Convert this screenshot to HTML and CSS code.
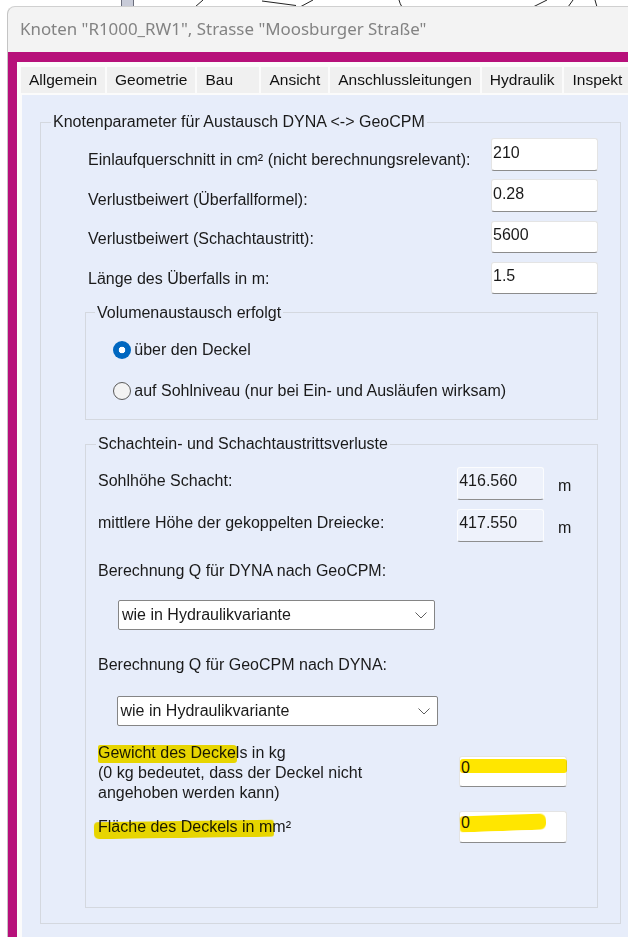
FILE: index.html
```html
<!DOCTYPE html>
<html lang="de">
<head>
<meta charset="utf-8">
<title>Knoten R1000_RW1</title>
<link rel="stylesheet" href="styles.css">
</head>
<body>
<div class="desktop">
  <svg class="sketch" width="628" height="6" viewBox="0 0 628 6">
    <rect x="121.5" y="-2" width="12" height="9" fill="#c8cbd8" stroke="#6b6e7c" stroke-width="1"/>
    <g fill="none" stroke="#222" stroke-width="1">
      <path d="M195 7 L203 0"/>
      <path d="M262 1 L296 5.5"/>
      <path d="M300 7 L313 0"/>
      <path d="M399 0 Q400 4 402 7"/>
      <path d="M533 7 L547 0"/>
      <path d="M568 7 L573 0"/>
      <path d="M595 0 L597 7"/>
    </g>
  </svg>
</div>
<div class="window">
  <div class="titlebar">Knoten "R1000_RW1", Strasse "Moosburger Straße"</div>
  <div class="frame">
    <div class="client">
      <div class="tabs">
        <div class="tab">Allgemein</div>
        <div class="tab">Geometrie</div>
        <div class="tab tab--wide">Bau</div>
        <div class="tab">Ansicht</div>
        <div class="tab">Anschlussleitungen</div>
        <div class="tab">Hydraulik</div>
        <div class="tab">Inspekt</div>
      </div>
      <div class="page">
        <fieldset class="group group--outer">
          <legend>Knotenparameter für Austausch DYNA &lt;-&gt; GeoCPM</legend>
          <div class="params">
            <div class="params__labels">
              <div class="label">Einlaufquerschnitt in cm² (nicht berechnungsrelevant):</div>
              <div class="label">Verlustbeiwert (Überfallformel):</div>
              <div class="label">Verlustbeiwert (Schachtaustritt):</div>
              <div class="label">Länge des Überfalls in m:</div>
            </div>
            <div class="params__fields">
              <div class="field">210</div>
              <div class="field">0.28</div>
              <div class="field">5600</div>
              <div class="field">1.5</div>
            </div>
          </div>

          <fieldset class="group group--inner group--vol">
            <legend>Volumenaustausch erfolgt</legend>
            <div class="radios">
              <div class="radio-row"><span class="radio radio--on"></span>über den Deckel</div>
              <div class="radio-row"><span class="radio"></span>auf Sohlniveau (nur bei Ein- und Ausläufen wirksam)</div>
            </div>
          </fieldset>

          <fieldset class="group group--inner group--schacht">
            <legend>Schachtein- und Schachtaustrittsverluste</legend>
            <div class="schacht">
              <div class="ro-row">
                <div class="label">Sohlhöhe Schacht:</div>
                <div class="field field--ro">416.560</div>
                <div class="unit">m</div>
              </div>
              <div class="ro-row ro-row--second">
                <div class="label">mittlere Höhe der gekoppelten Dreiecke:</div>
                <div class="field field--ro">417.550</div>
                <div class="unit">m</div>
              </div>

              <div class="label label--q1">Berechnung Q für DYNA nach GeoCPM:</div>
              <div class="select select--a">
                <span>wie in Hydraulikvariante</span>
                <svg class="chevron" width="12" height="7" viewBox="0 0 12 7"><polyline points="0.5,0.5 6,6 11.5,0.5" fill="none" stroke="#5f5f5f" stroke-width="1"/></svg>
              </div>

              <div class="label label--q2">Berechnung Q für GeoCPM nach DYNA:</div>
              <div class="select select--b">
                <span>wie in Hydraulikvariante</span>
                <svg class="chevron" width="12" height="7" viewBox="0 0 12 7"><polyline points="0.5,0.5 6,6 11.5,0.5" fill="none" stroke="#5f5f5f" stroke-width="1"/></svg>
              </div>

              <div class="cover-row cover-row--weight">
                <div class="label label--multi"><span class="mark mark--weight">Gewicht des Deck</span>els in kg<br>(0 kg bedeutet, dass der Deckel nicht<br>angehoben werden kann)</div>
                <div class="field field--cover field--mark-a">0</div>
              </div>
              <div class="cover-row cover-row--area">
                <div class="label label--line"><span class="mark mark--area">Fläche des Deckels in mm</span>²</div>
                <div class="field field--cover field--mark-b">0</div>
              </div>
            </div>
          </fieldset>
        </fieldset>
      </div>
    </div>
  </div>
</div>
</body>
</html>
```

FILE: styles.css
```css
html, body {
  margin: 0;
  padding: 0;
}
html {
  overflow: hidden;
}
body {
  width: 628px;
  height: 937px;
  overflow: hidden;
  background: #ffffff;
  font-family: "Liberation Sans", Arial, sans-serif;
  font-size: 16px;
  color: #1a1a1a;
}

/* desktop strip above the dialog */
.desktop {
  height: 6px;
  overflow: hidden;
}
.sketch {
  display: block;
}

/* window */
.window {
  margin-left: 7px;
  height: 931px;
  border-left: 1px solid #c4c4c4;
  border-top: 1px solid #d0d0d0;
  border-top-left-radius: 8px;
  background: #f3f3f3;
  overflow: hidden;
}
.titlebar {
  height: 45px;
  box-sizing: border-box;
  display: flex;
  align-items: center;
  padding: 0 0 2px 12px;
  font-family: "Noto Sans", "Open Sans", sans-serif;
  font-size: 16.9px;
  color: #838383;
  white-space: nowrap;
}
.frame {
  background: #b7107a;
  padding: 10px 0 0 9px;
  height: 100%;
}
.client {
  background: #fbfbfb;
  padding-top: 5px;
  height: 100%;
}

/* tabs */
.tabs {
  display: flex;
  gap: 2px;
  padding-left: 4px;
  white-space: nowrap;
  overflow: hidden;
}
.tab {
  flex: none;
  height: 26px;
  box-sizing: border-box;
  line-height: 26px;
  padding: 0 8px;
  background: #f0f0f0;
  font-size: 15.5px;
  color: #111;
}
.tab--wide {
  min-width: 62px;
}

/* tab page */
.page {
  margin: 2px 0 0 5px;
  background: #e7edfa;
  padding: 18px 7px 40px 18px;
  height: 100%;
}

/* group boxes */
.group {
  margin: 0;
  padding: 0;
  border: 1px solid #d4d8df;
  min-width: 0;
}
.group > legend {
  padding: 0 2px;
  margin-left: 10px;
  line-height: 18px;
  font-size: 16px;
  color: #1a1a1a;
}
.group--inner > legend {
  margin-left: 9px;
}
.group--schacht > legend {
  margin-left: 10px;
}

.label {
  line-height: 18px;
  white-space: nowrap;
}

/* parameter rows */
.params {
  display: flex;
  padding: 7px 22px 0 47px;
}
.params__labels {
  flex: 1;
  display: flex;
  flex-direction: column;
  gap: 21.5px;
  padding-top: 13px;
}
.params__fields {
  width: 107px;
  display: flex;
  flex-direction: column;
  gap: 8.8px;
}
.field {
  position: relative;
  height: 32.5px;
  box-sizing: border-box;
  background: #ffffff;
  border: 1px solid #e4e4e4;
  border-bottom-color: #8c8c8c;
  border-radius: 3px;
  padding: 4.5px 1px 0;
  line-height: 18px;
  color: #1a1a1a;
}

/* Volumenaustausch */
.group--vol {
  margin: 9.2px 22px 0 44px;
}
.radios {
  display: flex;
  flex-direction: column;
  gap: 21.5px;
  padding: 18.3px 0 17.8px 27.3px;
}
.radio-row {
  display: flex;
  align-items: center;
  height: 20px;
  line-height: 18px;
  white-space: nowrap;
}
.radio {
  flex: none;
  width: 18px;
  height: 18px;
  box-sizing: border-box;
  border-radius: 50%;
  margin-right: 3px;
  background: #f3f3f3;
  border: 1px solid #5a5a5a;
}
.radio--on {
  border: none;
  background: radial-gradient(circle, #ffffff 0 3px, #0067c0 3.6px);
}

/* Schachtein- und Schachtaustrittsverluste */
.group--schacht {
  margin: 15.2px 22px 15.7px 44px;
}
.schacht {
  display: flex;
  flex-direction: column;
  padding: 13.2px 0 64.3px 12px;
}
.ro-row {
  display: flex;
  align-items: center;
  height: 33.3px;
}
.ro-row--second {
  margin-top: 9px;
  height: 32.7px;
}
.ro-row .label {
  flex: 1;
  margin-bottom: 5px;
}
.field--ro {
  width: 87.3px;
  height: 100%;
  background: #eef2fb;
  border-color: #fbfcfe;
  border-bottom-color: #8e8e8e;
  padding-left: 1.5px;
}
.unit {
  width: 53px;
  box-sizing: border-box;
  padding-left: 14px;
  margin-top: 5px;
  line-height: 18px;
}

.label--q1 {
  margin-top: 20.5px;
}
.label--q2 {
  margin-top: 25.8px;
}
.select {
  height: 30px;
  box-sizing: border-box;
  display: flex;
  align-items: center;
  justify-content: space-between;
  background: #ffffff;
  border: 1px solid #858585;
  border-radius: 2px;
  padding: 0 7px 0 3px;
  line-height: 18px;
  white-space: nowrap;
}
.select--a {
  margin: 20.2px 0 0 20px;
  width: 317px;
}
.select--b {
  margin: 21.5px 0 0 18.5px;
  width: 321px;
}
.chevron {
  display: block;
  margin-top: 1px;
}

.cover-row {
  display: flex;
}
.cover-row--weight {
  margin-top: 17.8px;
  align-items: flex-start;
}
.cover-row--area {
  margin-top: 7.2px;
  align-items: center;
}
.label--multi,
.label--line {
  flex: 1;
  line-height: 20px;
}
.field--cover {
  width: 108px;
  margin-right: 30px;
  padding-top: 2.2px;
}
.cover-row--weight .field--cover {
  height: 31.5px;
  margin-top: 12.2px;
}
.cover-row--area .field--cover {
  height: 32px;
}

/* yellow marker annotations */
.mark {
  position: relative;
}
.mark::after,
.field--mark-a::after,
.field--mark-b::after {
  content: "";
  position: absolute;
  background: #ffe600;
  mix-blend-mode: multiply;
}
.mark--weight::after {
  left: 0;
  top: 0.7px;
  width: 138.5px;
  height: 18px;
  border-radius: 2px 4px 3px 2px;
}
.mark--area::after {
  left: -4px;
  top: 3.5px;
  width: 180px;
  height: 17px;
  border-radius: 4px 3px 3px 5px;
  transform: rotate(-0.8deg);
}
.field--mark-a::after {
  left: 0;
  top: 2px;
  width: 107px;
  height: 14px;
  border-radius: 3px;
}
.field--mark-b::after {
  left: 0;
  top: 3.3px;
  width: 85.5px;
  height: 16px;
  border-radius: 3px 6px 6px 3px;
  transform: rotate(-2deg);
}
```
